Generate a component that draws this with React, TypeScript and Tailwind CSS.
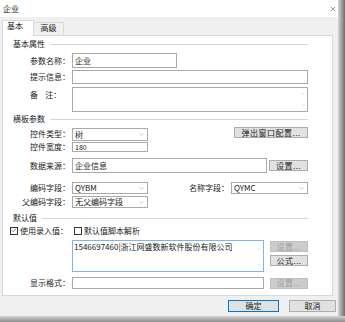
import { ChevronDown, ChevronUp, X, Check } from "lucide-react";

const Label = ({ children, w = "w-[67px]" }: { children: string; w?: string }) => (
  <div className={`${w} shrink-0 text-right whitespace-nowrap`}>{children}</div>
);

const Select = ({ value, w, h = "h-[12px]" }: { value: string; w: string; h?: string }) => (
  <div className={`${w} ${h} ml-[2px] flex items-center justify-between border border-[#a9a9a9] bg-white pl-[2px] pr-[2px]`}>
    <span className="leading-none">{value}</span>
    <ChevronDown className="h-[7px] w-[7px] text-[#8a8a8a]" strokeWidth={1.5} />
  </div>
);

const Btn = ({ children, w, disabled }: { children: string; w: string; disabled?: boolean }) => (
  <div
    className={`${w} h-[11px] flex items-center justify-center border leading-none tracking-[0.5px] ${
      disabled ? "border-[#bfbfbf] bg-[#cccccc] text-[#a0a0a0]" : "border-[#adadad] bg-[#e1e1e1] text-[#222]"
    }`}
  >
    {children}
  </div>
);

const Group = ({ title }: { title: string }) => (
  <div className="flex h-[10px] items-center pl-[10px]">
    <span className="leading-none">{title}</span>
    <div className="ml-[5px] mr-[24px] h-px flex-1 bg-[#d5d5d5]" />
  </div>
);

const Scroll = () => (
  <div className="flex w-[8px] flex-col items-center justify-between py-[3px] text-[#c0c0c0]">
    <ChevronUp className="h-[6px] w-[6px]" strokeWidth={2} />
    <ChevronDown className="h-[6px] w-[6px]" strokeWidth={2} />
  </div>
);

export default function App() {
  return (
    <div className="flex h-[322px] w-[345px] flex-col bg-[#9a9a9a] text-[8px] text-[#1a1a1a] font-['Noto_Sans_CJK_SC','Noto_Sans',sans-serif]">
      <div className="flex h-[316px]">
        <div className="flex w-[338px] flex-col bg-[#f0f0f0]">
          {/* title bar */}
          <div className="flex h-[17px] items-center justify-between bg-white pl-[3px] pr-[1px]">
            <span className="leading-none">企业</span>
            <X className="h-[8px] w-[8px] text-[#333]" strokeWidth={1.5} />
          </div>

          {/* tabs */}
          <div className="flex h-[18px] items-end pl-[2px]">
            <div className="relative z-10 -mb-px flex h-[16px] w-[32px] items-start border border-b-0 border-[#d9d9d9] bg-white pl-[4px] pt-[1px] leading-none">
              基本
            </div>
            <div className="flex h-[13px] w-[30px] items-start justify-center border border-b-0 border-l-0 border-[#d9d9d9] bg-[#f0f0f0] pt-[1px] leading-none">
              高级
            </div>
          </div>

          {/* panel */}
          <div className="ml-[2px] mr-[5px] flex h-[261px] flex-col border border-[#d9d9d9] bg-white">
            <div className="mt-[3px]">
              <Group title="基本属性" />
            </div>
            <div className="mt-[4px] flex h-[15px] items-center">
              <Label>参数名称：</Label>
              <div className="ml-[2px] h-full w-[105px] border border-[#a9a9a9] pl-[2px] leading-[13px]">企业</div>
            </div>
            <div className="mt-[2px] flex h-[14px] items-center">
              <Label>提示信息：</Label>
              <div className="ml-[2px] h-full w-[236px] border border-[#a9a9a9]" />
            </div>
            <div className="mt-[3px] flex h-[25px] items-start">
              <div className="w-[67px] shrink-0 whitespace-pre pl-[27px] pt-[4px] leading-none">备    注：</div>
              <div className="ml-[2px] flex h-full w-[236px] justify-end border border-[#a9a9a9]">
                <Scroll />
              </div>
            </div>

            <div className="mt-[2px]">
              <Group title="横板参数" />
            </div>
            <div className="mt-[3px] flex h-[14px] items-start">
              <div className="flex h-full items-center">
                <Label>控件类型：</Label>
              </div>
              <div className="mt-[1px]">
                <Select value="树" w="w-[76px]" h="h-[13px]" />
              </div>
              <div className="ml-[86px]">
                <Btn w="w-[74px]">弹出窗口配置...</Btn>
              </div>
            </div>
            <div className="mt-px flex h-[10px] items-center">
              <Label>控件宽度：</Label>
              <div className="ml-[2px] h-full w-[76px] border border-[#a9a9a9] pl-[2px] text-[7px] leading-[8px]">180</div>
            </div>
            <div className="mt-[6px] flex h-[15px] items-center">
              <Label>数据来源：</Label>
              <div className="ml-[2px] h-full w-[195px] border border-[#a9a9a9] pl-[2px] leading-[13px]">企业信息</div>
              <div className="ml-[2px]">
                <Btn w="w-[39px]">设置...</Btn>
              </div>
            </div>
            <div className="mt-[9px] flex h-[12px] items-center">
              <Label>编码字段：</Label>
              <Select value="QYBM" w="w-[76px]" />
              <Label w="w-[81px]">名称字段：</Label>
              <Select value="QYMC" w="w-[77px]" />
            </div>
            <div className="mt-[2px] flex h-[12px] items-center">
              <Label>父编码字段：</Label>
              <Select value="无父编码字段" w="w-[76px]" />
            </div>

            <div className="mt-[5px]">
              <Group title="默认值" />
            </div>
            <div className="mt-[3px] flex h-[9px] items-center">
              <div className="ml-[7px] flex h-[8px] w-[8px] items-center justify-center border border-[#333] bg-white">
                <Check className="h-[7px] w-[7px]" strokeWidth={2} />
              </div>
              <span className="ml-[2px] w-[52px] whitespace-nowrap leading-none">使用录入值：</span>
              <div className="ml-[2px] h-[8px] w-[8px] border border-[#333] bg-white" />
              <span className="ml-[2px] leading-none">默认值脚本解析</span>
            </div>
            <div className="mt-[5px] flex h-[32px] items-start">
              <div className="w-[67px] shrink-0" />
              <div className="ml-[2px] flex h-full w-[192px] justify-between border border-[#7eb4ea] pl-[1px] pt-[2px]">
                <span className="leading-none">1546697460|浙江网盛数新软件股份有限公司</span>
                <Scroll />
              </div>
              <div className="ml-[6px] flex flex-col gap-[3px] pt-px">
                <Btn w="w-[38px]" disabled>设置...</Btn>
                <Btn w="w-[38px]">公式...</Btn>
              </div>
            </div>
            <div className="mt-[5px] flex h-[12px] items-center">
              <Label>显示格式：</Label>
              <div className="ml-[2px] h-full w-[192px] border border-[#a9a9a9]" />
              <div className="ml-[6px]">
                <Btn w="w-[38px]" disabled>设置...</Btn>
              </div>
            </div>
          </div>

          {/* footer */}
          <div className="flex flex-1 items-center justify-end gap-[10px] pr-[2px]">
            <div className="flex h-[12px] w-[51px] items-center justify-center border border-[#0078d7] bg-[#e1e1e1] leading-none">确定</div>
            <div className="flex h-[12px] w-[47px] items-center justify-center border border-[#adadad] bg-[#e1e1e1] leading-none">取消</div>
          </div>
        </div>
        <div className="w-[7px] bg-gradient-to-r from-[#d8d8d8] to-[#6e6e6e]" />
      </div>
      <div className="h-[6px] bg-gradient-to-b from-[#d4d4d4] to-[#8c8c8c]" />
    </div>
  );
}
